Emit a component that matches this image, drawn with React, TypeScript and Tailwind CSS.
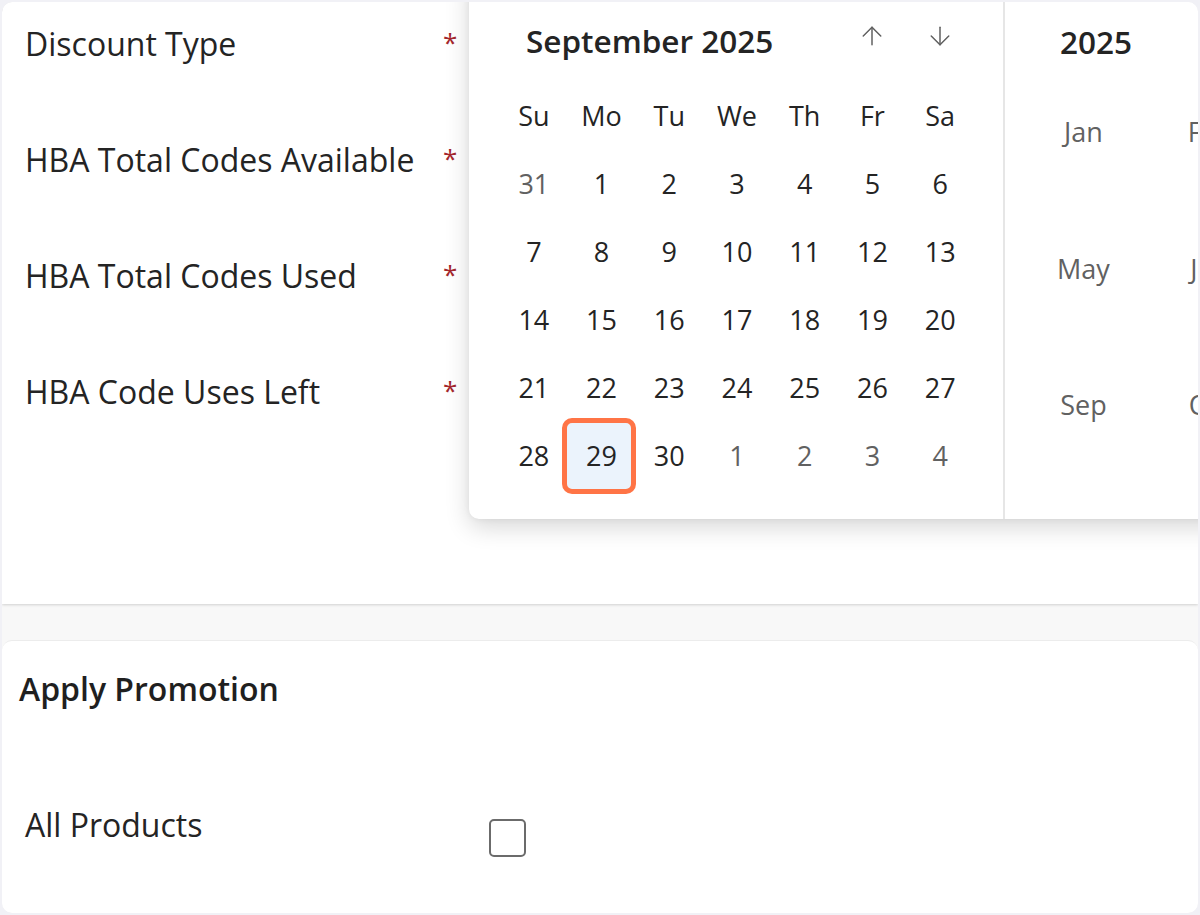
import { ArrowUp, ArrowDown } from 'lucide-react';

const font = { fontFamily: '"Open Sans", "Noto Sans", Arial, sans-serif' };

const labels = ['Discount Type', 'HBA Total Codes Available', 'HBA Total Codes Used', 'HBA Code Uses Left'];
const weekdays = ['Su', 'Mo', 'Tu', 'We', 'Th', 'Fr', 'Sa'];
const weeks = [
  [31, 1, 2, 3, 4, 5, 6],
  [7, 8, 9, 10, 11, 12, 13],
  [14, 15, 16, 17, 18, 19, 20],
  [21, 22, 23, 24, 25, 26, 27],
  [28, 29, 30, 1, 2, 3, 4],
];
const months = ['Jan', 'Feb', 'Mar', 'Apr', 'May', 'Jun', 'Jul', 'Aug', 'Sep', 'Oct', 'Nov', 'Dec'];

function DayCell({ day, week, idx }: { day: number; week: number; idx: number }) {
  const outside = (week === 0 && day > 7) || (week === 4 && day < 7);
  const selected = week === 4 && idx === 1;
  return (
    <div className="h-[68px] flex items-center justify-center">
      {selected ? (
        <div className="w-[74px] h-[76px] shrink-0 -ml-[6px] pl-[6px] flex items-center justify-center rounded-[10px] border-[5px] border-[#ff7446] bg-[#ebf3fc] text-[#242424]">
          {day}
        </div>
      ) : (
        <span className={outside ? 'text-[#616161]' : 'text-[#242424]'}>{day}</span>
      )}
    </div>
  );
}

export default function App() {
  return (
    <div className="w-[1200px] h-[915px] bg-[#f1f1f6] p-[2px]" style={font}>
      <div className="relative h-full rounded-[10px] overflow-hidden bg-[#f8f8f8] flex flex-col">
        {/* details card */}
        <div className="h-[602px] bg-white rounded-t-[10px] shadow-[0_1px_3px_rgba(0,0,0,0.16)] pl-[23px] pt-[22px]">
          <div className="flex flex-col gap-[76px]">
            {labels.map((l) => (
              <div key={l} className="h-[40px] flex items-center">
                <span className="w-[418px] text-[32px] text-[#242424]">{l}</span>
                <span className="text-[26px] text-[#a4262c] -mt-[4px]">*</span>
              </div>
            ))}
          </div>
        </div>

        <div className="h-[36px] shrink-0" />

        {/* apply promotion card */}
        <div className="flex-1 bg-white rounded-[10px] border-t border-[#ececec] pl-[17px] pt-[28px]">
          <div className="h-[40px] flex items-center text-[32px] font-semibold text-[#1f1f1f]">Apply Promotion</div>
          <div className="mt-[96px] h-[40px] flex items-center">
            <span className="w-[470px] pl-[6px] text-[32px] text-[#242424]">All Products</span>
            <div className="w-[37px] h-[38px] mt-[26px] rounded-[5px] border-2 border-[#6b6b6b] bg-white" />
          </div>
        </div>

        {/* date picker popup */}
        <div className="absolute left-[467px] top-[-30px] w-[800px] h-[547px] bg-white rounded-[10px] shadow-[0_8px_24px_rgba(0,0,0,0.16),0_0_6px_rgba(0,0,0,0.06)] flex">
          <div className="w-[536px] shrink-0 border-r-2 border-[#e6e6e6] pl-[31px] pt-[35px]">
            <div className="w-[474px] h-[68px] flex items-center">
              <span className="flex-1 pl-[26px] text-[31.5px] font-semibold text-[#242424]">September 2025</span>
              <span className="w-[67.7px] flex justify-center -mt-[10px]">
                <ArrowUp className="w-[30px] h-[30px] text-[#616161]" strokeWidth={1.2} />
              </span>
              <span className="w-[67.7px] flex justify-center -mt-[10px]">
                <ArrowDown className="w-[30px] h-[30px] text-[#616161]" strokeWidth={1.2} />
              </span>
            </div>
            <div className="w-[474px] mt-[7px] grid grid-cols-7 text-[27px]">
              {weekdays.map((d) => (
                <div key={d} className="h-[68px] flex items-center justify-center text-[#242424]">{d}</div>
              ))}
              {weeks.map((w, wi) => w.map((d, di) => <DayCell key={`${wi}-${di}`} day={d} week={wi} idx={di} />))}
            </div>
          </div>
          <div className="flex-1 pt-[36px]">
            <div className="h-[68px] flex items-center pl-[55px] text-[31.5px] font-semibold text-[#242424]">2025</div>
            <div className="pl-[15px] grid grid-cols-4 w-[523px] -mt-[12px] text-[27px] text-[#616161]">
              {months.map((m) => (
                <div key={m} className="h-[136.5px] flex items-center justify-center">{m}</div>
              ))}
            </div>
          </div>
        </div>
      </div>
    </div>
  );
}
